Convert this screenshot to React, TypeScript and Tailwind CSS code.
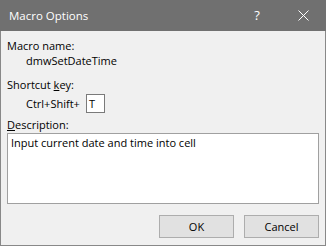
import React from "react";

const font = { fontFamily: '"Open Sans", "Noto Sans", "Liberation Sans", sans-serif' };

function TitleBar() {
  return (
    <div className="flex h-[31px] shrink-0 items-center bg-[#707070] text-[11.5px] text-white">
      <div className="pl-[9px] leading-[15px]">Macro Options</div>
      <div className="ml-auto flex h-full items-center">
        <div className="flex h-full w-[46px] items-center justify-center text-[13px] leading-none">?</div>
        <div className="flex h-full w-[46px] items-center justify-center">
          <svg width="11" height="11" viewBox="0 0 11 11" aria-hidden="true">
            <path d="M0.5 0.5 L10.5 10.5 M10.5 0.5 L0.5 10.5" stroke="#ffffff" strokeWidth="1" fill="none" />
          </svg>
        </div>
      </div>
    </div>
  );
}

function Button({ label }: { label: string }) {
  return (
    <div className="flex h-[23px] w-[75px] items-center justify-center border border-[#adadad] bg-[#e1e1e1] text-[11px] leading-[15px]">
      {label}
    </div>
  );
}

export default function App() {
  return (
    <div className="flex h-[246px] w-[326px] flex-col bg-[#f0f0f0] text-black" style={font}>
      <TitleBar />
      <div className="flex flex-1 flex-col border-x border-b border-[#888888] pl-[6px] pr-[6px] text-[11px] leading-[15px]">
        <div className="mt-[7px] h-[15px]">Macro name:</div>
        <div className="h-[15px] pl-[19px]">dmwSetDateTime</div>
        <div className="mt-[9px] h-[15px]">
          Shortcut <u>k</u>ey:
        </div>
        <div className="mt-[2px] flex h-[19px] items-center pl-[19px]">
          <span>Ctrl+Shift+</span>
          <div className="ml-[6px] flex h-[19px] w-[19px] items-center border border-[#7a7a7a] bg-white pl-[2px]">T</div>
        </div>
        <div className="mt-[4px] h-[15px]">
          <u>D</u>escription:
        </div>
        <div className="mt-[1px] h-[71px] border border-[#a0a0a0] bg-white px-[3px] pt-[1px]">
          Input current date and time into cell
        </div>
        <div className="mt-[11px] flex justify-end gap-[10px]">
          <Button label="OK" />
          <Button label="Cancel" />
        </div>
      </div>
    </div>
  );
}
